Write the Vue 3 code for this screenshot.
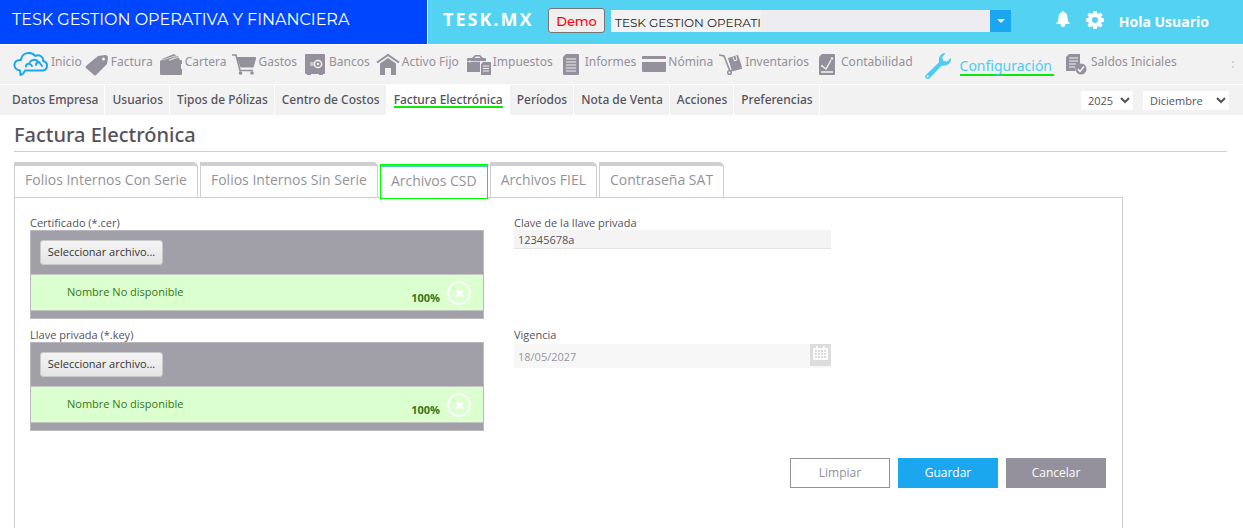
<script setup>
import { ref } from 'vue'

const company = ref('TESK GESTION OPERATI')
const year = ref('2025')
const month = ref('Diciembre')
const password = ref('12345678a')
const expiry = ref('18/05/2027')

const modules = [
  { id: 'inicio', label: 'Inicio' },
  { id: 'factura', label: 'Factura' },
  { id: 'cartera', label: 'Cartera' },
  { id: 'gastos', label: 'Gastos' },
  { id: 'bancos', label: 'Bancos' },
  { id: 'activo', label: 'Activo Fijo' },
  { id: 'impuestos', label: 'Impuestos' },
  { id: 'informes', label: 'Informes' },
  { id: 'nomina', label: 'Nómina' },
  { id: 'inventarios', label: 'Inventarios' },
  { id: 'contabilidad', label: 'Contabilidad' },
  { id: 'config', label: 'Configuración' },
  { id: 'saldos', label: 'Saldos Iniciales' },
]

const sections = [
  'Datos Empresa', 'Usuarios', 'Tipos de Pólizas', 'Centro de Costos',
  'Factura Electrónica', 'Períodos', 'Nota de Venta', 'Acciones', 'Preferencias',
]

const tabs = [
  'Folios Internos Con Serie', 'Folios Internos Sin Serie', 'Archivos CSD',
  'Archivos FIEL', 'Contraseña SAT',
]

const uploads = [
  { id: 'cer', label: 'Certificado (*.cer)' },
  { id: 'key', label: 'Llave privada (*.key)' },
]
</script>

<template>
  <div class="page">
    <header class="top">
      <div class="company">TESK GESTION OPERATIVA Y FINANCIERA</div>
      <div class="bar">
        <span class="brand">TESK.MX</span>
        <button class="demo" type="button">Demo</button>
        <div class="combo">
          <input v-model="company" type="text" aria-label="Empresa" />
          <button type="button" aria-label="Abrir lista">
            <svg width="8" height="4" viewBox="0 0 8 4"><path d="M0 0h8L4 4z" fill="#e3f5fd" /></svg>
          </button>
        </div>
        <div class="user">
          <svg class="bell" width="16" height="17" viewBox="0 0 16 17" fill="#fff">
            <path d="M8 0c.8 0 1.300.5 1.300 1.200C11.500 2 12.500 4 12.500 6.200c0 3.300.9 5 3 6.800H.5c2.100-1.800 3-3.500 3-6.800C3.500 4 4.500 2 6.700 1.200 6.700.5 7.200 0 8 0zM5.500 13h5c0 2-1.200 3-2.500 3s-2.500-1-2.500-3z" />
          </svg>
          <svg class="gear" width="18" height="18" viewBox="0 0 18 18" fill="#fff" fill-rule="evenodd">
            <path d="M7.300 0h3.400l.5 2.500 1 .4 2.100-1.400 2.300 2.300-1.400 2.100.4 1.100 2.400.4v3.300l-2.400.5-.4 1 1.400 2.100-2.300 2.300-2.100-1.400-1 .4-.5 2.400H7.300l-.5-2.400-1-.4-2.100 1.400-2.300-2.300 1.400-2.100-.4-1L0 10.700V7.400L2.400 7l.4-1.100-1.400-2.100 2.300-2.300 2.100 1.400 1-.4zM9 6a3 3 0 1 0 0 6 3 3 0 0 0 0-6z" />
          </svg>
          <span class="hello">Hola Usuario</span>
        </div>
      </div>
    </header>

    <nav class="modules" aria-label="Módulos">
      <a v-for="m in modules" :key="m.id" href="#" :class="['module', m.id]">
        <svg v-if="m.id === 'inicio'" class="icon" viewBox="0 0 36 26" fill="none" stroke="#1ba7f0" stroke-width="2" stroke-linecap="round" stroke-linejoin="round">
          <path d="M12 18.500h17c3 0 5-2 5-5s-2-4-4-4.500c1-4-4-7-7.500-5C18-1 9 0 8 8c-4-.5-7 2-6.500 5.500.3 3 2 4.500 5.500 5l.5 4.500c2.500-.5 3.500-2 4.500-4.500z" />
          <path d="M13 14.500c0-3 4-4 6-.5M17 10c2-3 7-3 8.500.5M23 13c0-2 1-3 3-3l3 4" />
        </svg>
        <svg v-else class="icon" viewBox="0 0 24 24" fill="#94909c">
          <path v-if="m.id === 'factura'" fill-rule="evenodd" d="M13 3l7-1q3 0 3 3l-1 6L11 22q-1 1-2 0l-8-7q-1-1 0-2zM18.500 4.500a1.500 1.500 0 1 0 0 3 1.500 1.500 0 0 0 0-3z" />
          <g v-else-if="m.id === 'cartera'">
            <path d="M2 7h20q1 0 1 1v3h-1v5h1v5q0 1-1 1H2q-1 0-1-1V9q0-1 1-2z" />
            <path d="M3 6l12-5 3 2-8 4H3zM11 7l8-4 2 4z" />
            <path d="M3 7L18 2.500M10 7.500L20 4" stroke="#f2f2f2" stroke-width=".7" />
          </g>
          <g v-else-if="m.id === 'gastos'">
            <path d="M5 4h19.500l-3 10.500H8.500z" />
            <path d="M0 2h4l4 15.500h13" fill="none" stroke="#94909c" stroke-width="1.600" />
            <circle cx="8.500" cy="20" r="1.800" /><circle cx="20" cy="20" r="1.800" />
          </g>
          <g v-else-if="m.id === 'bancos'">
            <path d="M3 1h18q1 0 1 1v18q0 1-1 1h-1v1h-4v-1H8v1H4v-1H3q-1 0-1-1V2q0-1 1-1z" />
            <circle cx="15" cy="11" r="3.600" fill="none" stroke="#f2f2f2" stroke-width="1.500" />
            <circle cx="15" cy="11" r="1.200" fill="#f2f2f2" />
            <path d="M8 9v4M10 9v4" stroke="#f2f2f2" />
          </g>
          <g v-else-if="m.id === 'activo'">
            <path d="M4 10.500L12 5l8 5.500V22h-5v-7H9v7H4z" />
            <path d="M1 9.500L12 2l11 7.500" fill="none" stroke="#94909c" stroke-width="2" />
          </g>
          <g v-else-if="m.id === 'impuestos'">
            <path d="M1 5h4l3-3h5l3 3h2q1 0 1 1v2h-6v11H0V6q0-1 1-1z" />
            <path d="M7.500 5l1.500-1.500h3L13.500 5z" fill="#f2f2f2" />
            <path d="M3 7v3M0 8.500h13" stroke="#f2f2f2" stroke-width=".7" />
            <path d="M16 9h8v13H14V11z" />
            <path d="M16 13h6M16 15.500h6M16 18h6" stroke="#f2f2f2" />
          </g>
          <g v-else-if="m.id === 'informes'">
            <path d="M7 1h12q1 0 1 1v19q0 1-1 1H5q-1 0-1-1V4z" />
            <path d="M7 6h10M7 9h10M7 12h10M7 15h10M7 18h10" stroke="#f2f2f2" />
          </g>
          <g v-else-if="m.id === 'nomina'">
            <rect y="3" width="24" height="16" rx="1" /><path d="M0 6h24v3H0z" fill="#f2f2f2" />
          </g>
          <g v-else-if="m.id === 'inventarios'">
            <path d="M9 5l10-3 4 12-10 4z" /><path d="M14 4l1.500 4 2.500-1-1-4" fill="none" stroke="#f2f2f2" />
            <path d="M0 2l5 1 6 15 12-3" fill="none" stroke="#94909c" stroke-width="1.600" />
            <circle cx="10.500" cy="19.500" r="1.800" fill="#f2f2f2" stroke="#94909c" stroke-width="1.500" />
          </g>
          <g v-else-if="m.id === 'contabilidad'">
            <path d="M7 1h12q1 0 1 1v19q0 1-1 1H5q-1 0-1-1V4z" />
            <path d="M7 13l4 3 5-9M6 19h12" fill="none" stroke="#f2f2f2" stroke-width="1.300" />
            <circle cx="17" cy="5.500" r="1.200" fill="#f2f2f2" /><circle cx="7" cy="13" r="1" fill="#f2f2f2" />
          </g>
          <g v-else-if="m.id === 'config'" fill="#4ecbf0">
            <path fill-rule="evenodd" d="M19 0l-3 4 .5 3L20 8l4-3.500c.5 5-4 8-8.500 7L4 23.500c-2 1.500-5-1-3.500-3L13 8.500C12 4 14.500 0 19 0zM2.500 20.500a1 1 0 1 0 0 2 1 1 0 0 0 0-2z" />
          </g>
          <g v-else>
            <path d="M4 1h11v10a6 6 0 0 0-4.500 7H1V4z" />
            <path d="M4 5h9M4 8h9M4 11h7M4 14h6" stroke="#f2f2f2" />
            <circle cx="16" cy="16" r="5.500" />
            <path d="M13 16l2 2.500 4-5" fill="none" stroke="#f2f2f2" stroke-width="1.500" />
          </g>
        </svg>
        <span class="name">{{ m.label }}</span>
      </a>
      <svg class="more" width="2" height="8" viewBox="0 0 2 8" fill="#c9d9e4" aria-hidden="true">
        <path d="M0 0h2v2H0zM0 5h2v2H0z" />
      </svg>
    </nav>

    <div class="submenu">
      <nav class="sections" aria-label="Secciones">
        <a v-for="s in sections" :key="s" href="#" :class="{ active: s === 'Factura Electrónica' }"><span>{{ s }}</span></a>
      </nav>
      <select v-model="year" class="year" aria-label="Año"><option>2025</option></select>
      <select v-model="month" class="month" aria-label="Mes"><option>Diciembre</option></select>
    </div>

    <main class="content">
      <h1>Factura Electrónica</h1>
      <div class="tabs" role="tablist">
        <button v-for="t in tabs" :key="t" type="button" role="tab" :aria-selected="t === 'Archivos CSD'" :class="{ active: t === 'Archivos CSD' }">{{ t }}</button>
      </div>
      <section class="panel">
        <form class="form" @submit.prevent>
          <div class="files">
            <div v-for="u in uploads" :key="u.id" class="field">
              <label :for="u.id">{{ u.label }}</label>
              <div class="upload">
                <div class="pick"><button :id="u.id" type="button">Seleccionar archivo...</button></div>
                <div class="file">
                  <span class="filename">Nombre No disponible</span>
                  <strong>100%</strong>
                  <button type="button" aria-label="Quitar archivo">
                    <svg width="24" height="24" viewBox="0 0 24 24" fill="none" stroke="#fafff7">
                      <circle cx="12" cy="12" r="11" stroke-width="2" />
                      <path d="M9 9l7 7M16 9l-7 7" stroke-width="3" />
                    </svg>
                  </button>
                </div>
                <div class="foot"></div>
              </div>
            </div>
          </div>
          <div class="data">
            <div class="field">
              <label for="password">Clave de la llave privada</label>
              <input id="password" v-model="password" type="text" />
            </div>
            <div class="field">
              <label for="expiry">Vigencia</label>
              <div class="date">
                <input id="expiry" v-model="expiry" type="text" disabled />
                <button type="button" disabled aria-label="Calendario">
                  <svg width="15" height="14" viewBox="0 0 15 14">
                    <path d="M0 2h3V0h2v2h5V0h2v2h3v12H0z" fill="#fafafa" />
                    <path d="M2 5h11M2 8h11M2 11h11" stroke="#dcdcdc" stroke-width="2" stroke-dasharray="2 1" />
                  </svg>
                </button>
              </div>
            </div>
          </div>
          <div class="actions">
            <button type="button" class="clear">Limpiar</button>
            <button type="submit" class="save">Guardar</button>
            <button type="button" class="cancel">Cancelar</button>
          </div>
        </form>
      </section>
    </main>
  </div>
</template>

<style>
body { background: #fff; }
</style>

<style scoped>
* { box-sizing: border-box; }
.page {
  display: flex;
  flex-direction: column;
  min-height: 100vh;
  font-family: "Open Sans", "Noto Sans", sans-serif;
  font-size: 11px;
  color: #55525c;
}
a { text-decoration: none; color: inherit; }
button, input, select { font: inherit; color: inherit; margin: 0; padding: 0; border: 0; border-radius: 0; }
svg { display: block; flex: none; }

.top { display: flex; height: 44px; }
.company {
  flex: 0 0 427px;
  padding-left: 12px;
  background: #0146ff;
  color: #fff;
  font-family: Montserrat, Inter, sans-serif;
  font-size: 16px;
  line-height: 39px;
}
.bar { display: flex; flex: 1; margin-left: 1px; padding: 0 34px 0 15px; background: #53d2f2; align-items: flex-start; }
.brand { width: 105px; color: #fff; font-size: 18px; font-weight: 700; letter-spacing: 2px; line-height: 38px; }
.demo {
  width: 57px;
  height: 25px;
  margin-top: 8px;
  border: 1px solid #767676;
  border-radius: 3px;
  background: #efefef;
  color: #f00;
  font-family: Montserrat, Inter, sans-serif;
  font-size: 13px;
  font-weight: 500;
}
.combo { display: flex; flex: 0 1 400px; height: 22px; margin: 10px 0 0 6px; background: #ededf1; }
.combo input {
  width: 150px;
  height: 22px;
  margin-right: auto;
  padding: 3px 0 0 4px;
  background: #f2f2f2;
  color: #222;
  font-family: Montserrat, Inter, sans-serif;
  font-size: 12px;
}
.combo button { width: 21px; display: grid; place-items: center; background: #1ba7f0; }
.user { display: flex; align-items: flex-start; margin: 10px 0 0 auto; color: #fff; }
.bell { margin-top: 1px; }
.gear { margin: 1px 15px 0; }
.hello { font-size: 14px; font-weight: 700; line-height: 24px; }

.modules { display: flex; gap: 6px; height: 39px; margin-top: 1px; padding: 7px 9px 0 13px; background: #f2f2f2; color: #94909c; overflow: hidden; }
.module { display: flex; flex: none; gap: 2px; font-family: "Noto Sans", sans-serif; font-size: 12px; line-height: 20px; white-space: nowrap; }
.icon { width: 24px; height: 24px; margin-top: 1px; }
.inicio { margin-right: -3px; }
.inicio .icon { width: 36px; height: 26px; margin-top: 0; }
.impuestos { margin-left: 2px; }
.config { gap: 9px; margin: 0 5px 0 6px; color: #4ecbf0; font-size: 14px; line-height: 28px; }
.config .icon { width: 26px; height: 26px; }
.config .name { height: 24px; padding-right: 2px; border-bottom: 2px solid #0be90b; }
.more { margin: 9px 0 0 auto; }

.submenu { display: flex; height: 30px; margin-top: 1px; padding-right: 14px; background: #f2f2f2; align-items: center; }
.sections { display: flex; align-self: stretch; margin-right: auto; padding-left: 5px; font-family: "Noto Sans", sans-serif; font-size: 12px; font-weight: 500; line-height: 29px; white-space: nowrap; }
.sections a { padding: 0 6px 0 7px; border-right: 1px solid #fff; }
.sections .active { background: #fff; }
.sections span { display: block; height: 23px; }
.sections .active span { border-bottom: 2px solid #0be90b; }
.submenu select { height: 19px; padding-left: 3px; background-color: #fff; }
.year { width: 52px; margin-right: 10px; }
.month { width: 86px; }

.content { display: flex; flex-direction: column; flex: 1; padding: 0 16px 0 14px; }
h1 { height: 37px; margin: 0 0 10px; border-bottom: 1px solid #cfcfd1; font-family: "Noto Sans", sans-serif; font-size: 20px; font-weight: 500; line-height: 40px; }
.tabs { display: flex; gap: 2px; height: 35px; }
.tabs button {
  height: 35px;
  padding: 0 10px 4px;
  border: 1px solid #cfcfd1;
  border-width: 4px 1px 0;
  border-radius: 0 5px 0 0;
  background: #fff;
  color: #94939b;
  font-size: 14px;
  line-height: 26px;
}
.tabs .active { margin-top: 2px; border: 1px solid #0f0; border-radius: 0; box-shadow: inset 0 2px #53c3c3; padding-bottom: 1px; position: relative; }
.panel { flex: 1; margin-right: 104px; border: 1px solid #cfcfd1; border-bottom: 0; }
.form { display: grid; grid-template-columns: 454px 317px 1fr; column-gap: 30px; padding: 17px 16px 20px 15px; }
.field label { display: block; line-height: 15px; }
.files { display: grid; gap: 8px; }
.upload { border: 1px solid #b9b8bd; background: #a19fa8; }
.pick { height: 43px; padding: 9px; }
.pick button { width: 123px; height: 25px; padding-bottom: 2px; border: 1px solid #c9c9c9; border-radius: 3px; background: linear-gradient(#f4f4f4, #e4e4e4); color: #333; }
.file { display: flex; height: 37px; padding: 0 12px 0 36px; border: 1px solid #c5c5c5; border-width: 1px 0; background: #dbffcf; color: #37761a; }
.filename { margin-right: auto; line-height: 34px; }
.file strong { margin-right: 7px; line-height: 46px; }
.file button { margin-top: 6px; height: 24px; background: none; }
.foot { height: 7px; }
.data { display: grid; grid-template-rows: 112px auto; align-content: start; }
.data input { display: block; width: 100%; height: 19px; padding-left: 4px; border-bottom: 1px solid #e4e4e4; background: #f4f4f4; }
.date { display: flex; height: 24px; margin-top: 2px; background: #f7f7f7; }
.date input { flex: 1; height: 24px; background: #f7f7f7; border: 0; color: #97969c; }
.date button { display: grid; place-items: center; width: 21px; height: 22px; padding-bottom: 4px; background: #dcdcdc; }
.actions { grid-column: 1 / -1; display: flex; justify-content: flex-end; gap: 8px; margin-top: 27px; }
.actions button { width: 100px; height: 30px; padding-bottom: 1px; font-size: 12px; color: #fff; }
.actions .clear { border: 1px solid #94909c; background: #fff; color: #94909c; }
.actions .save { background: #1ba7f0; }
.actions .cancel { background: #94909c; }
</style>
